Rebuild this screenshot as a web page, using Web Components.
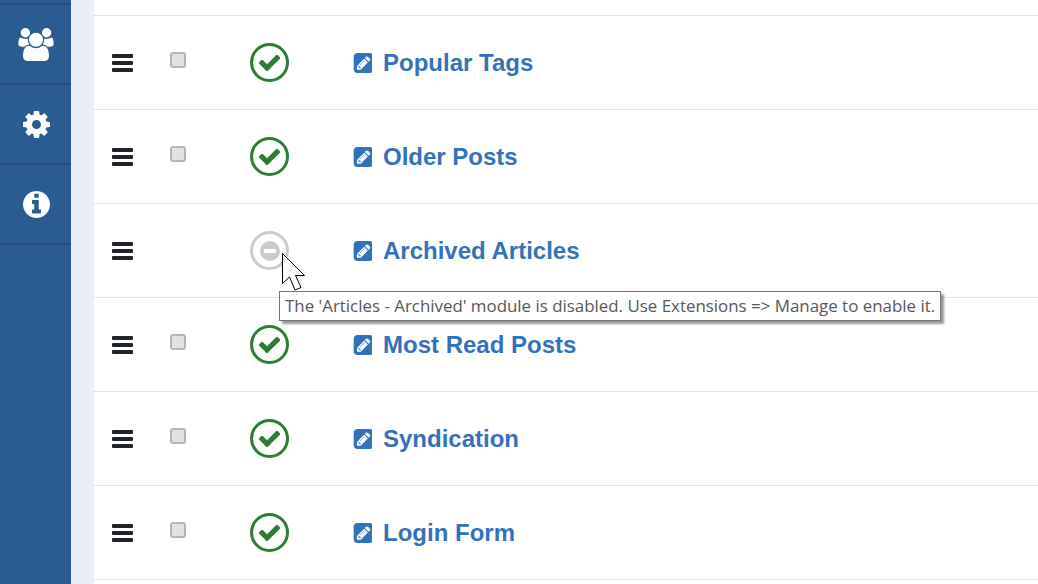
<!DOCTYPE html>
<html>
<head>
<meta charset="utf-8">
<title>Modules</title>
<style>
    html, body { margin: 0; height: 100%; overflow: hidden; background: #fff; }
    body { font-family: "Liberation Sans", Arial, sans-serif; }
</style>
</head>
<body>
<admin-page>
    <side-bar slot="nav">
        <side-item icon="users"></side-item>
        <side-item icon="cog"></side-item>
        <side-item icon="info"></side-item>
    </side-bar>
    <module-row>Popular Tags</module-row>
    <module-row>Older Posts</module-row>
    <module-row disabled>Archived Articles</module-row>
    <module-row>Most Read Posts</module-row>
    <module-row>Syndication</module-row>
    <module-row>Login Form</module-row>
    <hover-tip slot="over">The 'Articles - Archived' module is disabled. Use Extensions =&gt; Manage to enable it.</hover-tip>
</admin-page>

<script>
const ICONS = {
    users: ['0 0 1920 1792', 'M593 896q-162 5-265 128h-134q-82 0-138-40.500t-56-118.500q0-353 124-353 6 0 43.500 21t97.500 42.500 119 21.500q67 0 133-23-5 37-5 66 0 139 81 256zm1071 637q0 120-73 189.500t-194 69.500h-874q-121 0-194-69.500t-73-189.500q0-53 3.500-103.500t14-109 26.500-108.500 43-97.500 62-81 85.500-53.500 111.500-20q10 0 43 21.500t73 48 107 48 135 21.500 135-21.500 107-48 73-48 43-21.500q61 0 111.500 20t85.500 53.500 62 81 43 97.500 26.500 108.500 14 109 3.500 103.500zm-1024-1277q0 106-75 181t-181 75-181-75-75-181 75-181 181-75 181 75 75 181zm704 384q0 159-112.500 271.500t-271.500 112.500-271.500-112.500-112.500-271.500 112.500-271.500 271.500-112.500 271.500 112.500 112.500 271.500zm576 225q0 78-56 118.500t-138 40.500h-134q-103-123-265-128 81-117 81-256 0-29-5-66 66 23 133 23 59 0 119-21.500t97.500-42.500 43.500-21q124 0 124 353zm-128-609q0 106-75 181t-181 75-181-75-75-181 75-181 181-75 181 75 75 181z'],
    cog: ['128 128 1536 1536', 'M1152 896q0-106-75-181t-181-75-181 75-75 181 75 181 181 75 181-75 75-181zm512-109v222q0 12-8 23t-20 13l-185 28q-19 54-39 91 35 50 107 138 10 12 10 25t-9 23q-27 37-99 108t-94 71q-12 0-26-9l-138-108q-44 23-91 38-16 136-29 186-7 28-36 28h-222q-14 0-24.500-8.500t-11.500-21.500l-28-184q-49-16-90-37l-141 107q-10 9-25 9-14 0-25-11-126-114-165-168-7-10-7-23 0-12 8-23 15-21 51-66.500t54-70.500q-27-50-41-99l-183-27q-13-2-21-12.500t-8-23.500v-222q0-12 8-23t19-13l186-28q14-46 39-92-40-57-107-138-10-12-10-24 0-10 9-23 26-36 98.500-107.500t94.500-71.500q13 0 26 10l138 107q44-23 91-38 16-136 29-186 7-28 36-28h222q14 0 24.500 8.500t11.500 21.500l28 184q49 16 90 37l142-107q9-9 24-9 13 0 25 10 129 119 165 170 7 8 7 22 0 12-8 23-15 21-51 66.500t-54 70.500q26 50 41 98l183 28q13 2 21 12.500t8 23.500z'],
    info: ['128 128 1536 1536', 'M1152 1376v-160q0-14-9-23t-23-9h-96v-512q0-14-9-23t-23-9h-320q-14 0-23 9t-9 23v160q0 14 9 23t23 9h96v320h-96q-14 0-23 9t-9 23v160q0 14 9 23t23 9h448q14 0 23-9t9-23zm-128-896v-160q0-14-9-23t-23-9h-192q-14 0-23 9t-9 23v160q0 14 9 23t23 9h192q14 0 23-9t9-23zm640 416q0 209-103 385.500t-279.500 279.500-385.500 103-385.500-103-279.500-279.500-103-385.500 103-385.500 279.500-279.500 385.500-103 385.500 103 279.500 279.500 103 385.500z'],
    check: ['128 128 1536 1536', 'M1671 566q0 40-28 68l-724 724-136 136q-28 28-68 28t-68-28l-136-136-362-362q-28-28-28-68t28-68l136-136q28-28 68-28t68 28l294 295 656-657q28-28 68-28t68 28l136 136q28 28 28 68z'],
    edit: ['0 128 1536 1536', 'M532 1108l152 152-52 52h-56v-96h-96v-56zm414-390q14 13-3 30l-291 291q-17 17-30 3-14-13 3-30l291-291q17-17 30-3zm-274 690l544-544-288-288-544 544v288h288zm608-608l92-92q28-28 28-68t-28-68l-152-152q-28-28-68-28t-68 28l-92 92zm384-384v960q0 119-84.500 203.500t-203.500 84.500h-960q-119 0-203.500-84.500t-84.500-203.500v-960q0-119 84.500-203.500t203.500-84.500h960q119 0 203.500 84.500t84.500 203.500z']
};

function svgIcon(name, w, h) {
    const [box, d] = ICONS[name];
    return `<svg width="${w}" height="${h}" viewBox="${box}" fill="currentColor"><path d="${d}"/></svg>`;
}

class AdminPage extends HTMLElement {
    constructor() {
        super();
        this.attachShadow({mode: 'open'});
        this.shadowRoot.innerHTML = `
            <style>
                :host { display: flex; width: 1038px; height: 584px; overflow: hidden; position: relative; }
                #strip { width: 23px; background: #e9edf5; flex: none; }
                #list { flex: 1; padding-top: 15px; }
                #rows { border-top: 1px solid #e2e2e2; }
            </style>
            <slot name="nav"></slot>
            <div id="strip"></div>
            <div id="list"><div id="rows"><slot></slot></div></div>
            <slot name="over"></slot>
        `;
    }
}

class SideBar extends HTMLElement {
    constructor() {
        super();
        this.attachShadow({mode: 'open'});
        this.shadowRoot.innerHTML = `
            <style>
                :host { display: block; width: 71px; flex: none; background: #2a5b91; padding-top: 3px; box-sizing: border-box; }
                #top { height: 2px; background: #234e7e; }
            </style>
            <div id="top"></div>
            <slot></slot>
        `;
    }
}

class SideItem extends HTMLElement {
    constructor() {
        super();
        this.attachShadow({mode: 'open'});
        const name = this.getAttribute('icon');
        const size = name === 'users' ? [36, 33] : [27, 27];
        this.shadowRoot.innerHTML = `
            <style>
                :host { display: flex; align-items: center; justify-content: center; height: 78px; border-bottom: 2px solid #234e7e; color: #fff; padding-left: 1px; box-sizing: content-box; }
                svg { display: block; }
            </style>
            ${svgIcon(name, size[0], size[1])}
        `;
    }
}

class ModuleRow extends HTMLElement {
    constructor() {
        super();
        this.attachShadow({mode: 'open'});
        const off = this.hasAttribute('disabled');
        this.shadowRoot.innerHTML = `
            <style>
                :host { display: grid; grid-template-columns: 58px 80px 102px auto; align-items: center; height: 93px; padding-left: 18px; border-bottom: 1px solid #e2e2e2; }
                #bars { width: 21px; display: flex; flex-direction: column; gap: 3px; }
                #bars i { display: block; height: 4px; background: #212529; border-radius: 1px; }
                #box { width: 16px; height: 16px; margin-bottom: 6px; box-sizing: border-box; border: 2px solid #b5b5b5; border-radius: 3px; background: #e2e2e2; }
                #state { width: 39px; height: 39px; box-sizing: border-box; border: 3px solid #2e7d32; border-radius: 50%; color: #2e7d32; display: flex; align-items: center; justify-content: center; }
                #state svg { display: block; }
                :host([disabled]) #state { border-color: #ccc; }
                #dot { width: 20px; height: 20px; border-radius: 50%; background: #ccc; display: flex; align-items: center; justify-content: center; }
                #dot i { display: block; width: 12px; height: 4px; background: #fff; border-radius: 1px; }
                #title { display: flex; align-items: center; gap: 11px; color: #3372ba; font: bold 24px "Liberation Sans", Arial, sans-serif; }
                #title svg { display: block; flex: none; }
            </style>
            <div id="bars"><i></i><i></i><i></i></div>
            <div>${off ? '' : '<div id="box"></div>'}</div>
            <div id="state">${off ? '<div id="dot"><i></i></div>' : svgIcon('check', 21, 21)}</div>
            <div id="title">${svgIcon('edit', 20, 20)}<span><slot></slot></span></div>
        `;
    }
}

class HoverTip extends HTMLElement {
    constructor() {
        super();
        this.attachShadow({mode: 'open'});
        this.shadowRoot.innerHTML = `
            <style>
                :host { display: contents; }
                #tip { position: absolute; left: 279px; top: 291px; height: 30px; box-sizing: border-box; padding: 0 5px; line-height: 28px; white-space: nowrap; background: #fff; border: 1px solid #767676; box-shadow: 3px 3px 2px rgba(0,0,0,.4); color: #575757; font: 16.9px/28px "Open Sans", sans-serif; }
                svg { position: absolute; left: 281px; top: 252px; display: block; }
            </style>
            <svg width="24" height="40" viewBox="0 0 24 40"><path d="M1.500 1.500V31.500L8.500 25L14 38L20 35.500L14.500 23.500H23.500Z" fill="#fff" stroke="#000" stroke-width="1"/></svg>
            <div id="tip"><slot></slot></div>
        `;
    }
}

customElements.define('admin-page', AdminPage);
customElements.define('side-bar', SideBar);
customElements.define('side-item', SideItem);
customElements.define('module-row', ModuleRow);
customElements.define('hover-tip', HoverTip);
</script>
</body>
</html>
